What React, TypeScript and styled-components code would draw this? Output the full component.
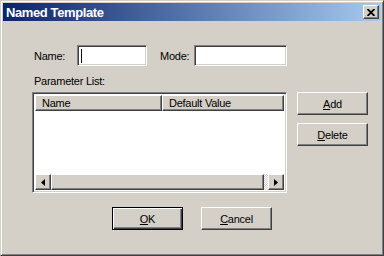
import styled, { createGlobalStyle, css } from 'styled-components'

const face = '#d4d0c8'
const shadow = '#808080'
const darkShadow = '#404040'

const GlobalStyle = createGlobalStyle`
  html, body {
    margin: 0;
    padding: 0;
    background: ${face};
    font-family: 'Liberation Sans', Arial, sans-serif;
    font-size: 11px;
    letter-spacing: -0.25px;
    color: #000;
  }
`

const sunken = css`
  box-sizing: border-box;
  border: 1px solid;
  border-color: ${shadow} #fff #fff ${shadow};
  box-shadow: inset 1px 1px ${darkShadow}, inset -1px -1px ${face};
`

const raised = css`
  box-sizing: border-box;
  border: 1px solid;
  border-color: #fff ${darkShadow} ${darkShadow} #fff;
  box-shadow: inset -1px -1px ${shadow};
  background: ${face};
`

const Window = styled.div`
  box-sizing: border-box;
  width: 384px;
  height: 256px;
  border: 1px solid;
  border-color: ${face} ${darkShadow} ${darkShadow} ${face};
  box-shadow: inset 1px 1px #fff, inset -1px -1px ${shadow};
  padding: 2px;
  display: flex;
  flex-direction: column;
  background: ${face};
`

const TitleBar = styled.div`
  height: 18px;
  display: flex;
  align-items: center;
  justify-content: space-between;
  padding: 0 2px 0 2px;
  background: linear-gradient(to right, #0a246a, #a6caf0);
`

const Title = styled.span`
  color: #fff;
  font-weight: bold;
  font-size: 13px;
  letter-spacing: -0.4px;
  padding-left: 1px;
`

const CloseButton = styled.div`
  ${raised};
  width: 16px;
  height: 14px;
  display: flex;
  align-items: center;
  justify-content: center;
`

const Body = styled.div`
  flex: 1;
  display: flex;
  flex-direction: column;
  padding-top: 24px;
`

const Section = styled.div`
  padding-left: 29px;
`

const FieldRow = styled.div`
  display: flex;
  align-items: center;
  height: 21px;
`

const Label = styled.span<{ $width?: number; $gap?: number }>`
  box-sizing: border-box;
  padding-left: 2px;
  width: ${p => (p.$width ? `${p.$width}px` : 'auto')};
  margin-left: ${p => p.$gap || 0}px;
`

const TextBox = styled.div<{ $width: number }>`
  ${sunken};
  width: ${p => p.$width}px;
  height: 21px;
  background: #fff;
  padding: 3px 0 0 3px;
`

const Caret = styled.div`
  width: 1px;
  height: 14px;
  background: #000;
`

const ListGrid = styled.div`
  display: grid;
  grid-template-columns: 255px 71px;
  column-gap: 10px;
  margin-top: 9px;
`

const ListLabel = styled.div`
  grid-column: 1 / span 2;
  padding-left: 2px;
  height: 17px;
`

const ListView = styled.div`
  ${sunken};
  height: 101px;
  padding: 2px;
  background: #fff;
  display: flex;
  flex-direction: column;
`

const Header = styled.div`
  display: flex;
  height: 16px;
`

const HeaderCell = styled.div<{ $width?: number }>`
  ${raised};
  ${p => (p.$width ? `width: ${p.$width}px;` : 'flex: 1;')}
  padding: 1px 0 0 6px;
  white-space: nowrap;
  overflow: hidden;
`

const Rows = styled.div`
  flex: 1;
`

const ScrollBar = styled.div`
  display: flex;
  height: 16px;
`

const ArrowButton = styled.div`
  ${raised};
  width: 16px;
  height: 16px;
  display: flex;
  align-items: center;
  justify-content: center;
`

const Thumb = styled.div`
  ${raised};
  flex: 1;
`

const Track = styled.div`
  width: 4px;
  background-image: repeating-conic-gradient(#fff 0 25%, ${face} 0 50%);
  background-size: 2px 2px;
`

const SideButtons = styled.div`
  display: flex;
  flex-direction: column;
  gap: 8px;
`

const Button = styled.div<{ $default?: boolean }>`
  box-sizing: border-box;
  width: 71px;
  height: 23px;
  display: flex;
  align-items: center;
  justify-content: center;
  background: ${face};
  border: 1px solid;
  ${p =>
    p.$default
      ? css`
          border-color: #000;
          box-shadow: inset 1px 1px #fff, inset -1px -1px ${darkShadow}, inset -2px -2px ${shadow};
        `
      : css`
          border-color: #fff ${darkShadow} ${darkShadow} #fff;
          box-shadow: inset -1px -1px ${shadow};
        `}
`

const Footer = styled.div`
  display: flex;
  justify-content: center;
  gap: 18px;
  margin-top: 14px;
`

const Arrow = ({ dir }: { dir: 'left' | 'right' }) => (
  <svg width="4" height="7" viewBox="0 0 4 7">
    <path d={dir === 'left' ? 'M4 0 L0 3.5 L4 7 Z' : 'M0 0 L4 3.5 L0 7 Z'} fill="#000" />
  </svg>
)

const App = () => {
  return (
    <>
      <GlobalStyle />
      <Window>
        <TitleBar>
          <Title>Named Template</Title>
          <CloseButton>
            <svg width="8" height="7" viewBox="0 0 8 7">
              <path d="M0.5 0 L7.5 7 M7.5 0 L0.5 7" stroke="#000" strokeWidth="1.8" />
            </svg>
          </CloseButton>
        </TitleBar>
        <Body>
          <Section>
            <FieldRow>
              <Label $width={45}>Name:</Label>
              <TextBox $width={70}>
                <Caret />
              </TextBox>
              <Label $width={36} $gap={11}>Mode:</Label>
              <TextBox $width={93} />
            </FieldRow>
            <ListGrid>
              <ListLabel>Parameter List:</ListLabel>
              <ListView>
                <Header>
                  <HeaderCell $width={127}>Name</HeaderCell>
                  <HeaderCell>Default Value</HeaderCell>
                </Header>
                <Rows />
                <ScrollBar>
                  <ArrowButton>
                    <Arrow dir="left" />
                  </ArrowButton>
                  <Thumb />
                  <Track />
                  <ArrowButton>
                    <Arrow dir="right" />
                  </ArrowButton>
                </ScrollBar>
              </ListView>
              <SideButtons>
                <Button>
                  <span><u>A</u>dd</span>
                </Button>
                <Button>
                  <span><u>D</u>elete</span>
                </Button>
              </SideButtons>
            </ListGrid>
          </Section>
          <Footer>
            <Button $default>
              <span><u>O</u>K</span>
            </Button>
            <Button>
              <span><u>C</u>ancel</span>
            </Button>
          </Footer>
        </Body>
      </Window>
    </>
  )
}

export default App
